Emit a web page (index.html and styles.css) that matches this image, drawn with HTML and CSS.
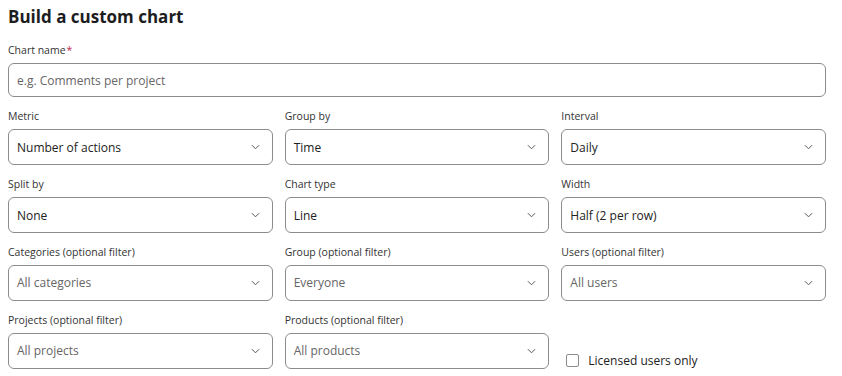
FILE: index.html
```html
<!DOCTYPE html>
<html lang="en">
<head>
    <meta charset="UTF-8">
    <meta name="viewport" content="width=device-width, initial-scale=1.0">
    <title>Build a custom chart</title>
    <link rel="stylesheet" href="styles.css">
</head>
<body>
    <h1 class="title">Build a custom chart</h1>

    <div class="field">
        <label class="label">Chart name<span class="req">*</span></label>
        <div class="box"><span class="placeholder">e.g. Comments per project</span></div>
    </div>

    <div class="grid">
        <div class="field">
            <label class="label">Metric</label>
            <div class="box select"><span>Number of actions</span><svg class="chev" viewBox="0 0 10 6"><path d="M1 1l4 4 4-4"/></svg></div>
        </div>
        <div class="field">
            <label class="label">Group by</label>
            <div class="box select"><span>Time</span><svg class="chev" viewBox="0 0 10 6"><path d="M1 1l4 4 4-4"/></svg></div>
        </div>
        <div class="field">
            <label class="label">Interval</label>
            <div class="box select"><span>Daily</span><svg class="chev" viewBox="0 0 10 6"><path d="M1 1l4 4 4-4"/></svg></div>
        </div>

        <div class="field">
            <label class="label">Split by</label>
            <div class="box select"><span>None</span><svg class="chev" viewBox="0 0 10 6"><path d="M1 1l4 4 4-4"/></svg></div>
        </div>
        <div class="field">
            <label class="label">Chart type</label>
            <div class="box select"><span>Line</span><svg class="chev" viewBox="0 0 10 6"><path d="M1 1l4 4 4-4"/></svg></div>
        </div>
        <div class="field">
            <label class="label">Width</label>
            <div class="box select"><span>Half (2 per row)</span><svg class="chev" viewBox="0 0 10 6"><path d="M1 1l4 4 4-4"/></svg></div>
        </div>

        <div class="field">
            <label class="label">Categories (optional filter)</label>
            <div class="box select"><span class="placeholder">All categories</span><svg class="chev" viewBox="0 0 10 6"><path d="M1 1l4 4 4-4"/></svg></div>
        </div>
        <div class="field">
            <label class="label">Group (optional filter)</label>
            <div class="box select"><span class="placeholder">Everyone</span><svg class="chev" viewBox="0 0 10 6"><path d="M1 1l4 4 4-4"/></svg></div>
        </div>
        <div class="field">
            <label class="label">Users (optional filter)</label>
            <div class="box select"><span class="placeholder">All users</span><svg class="chev" viewBox="0 0 10 6"><path d="M1 1l4 4 4-4"/></svg></div>
        </div>

        <div class="field">
            <label class="label">Projects (optional filter)</label>
            <div class="box select"><span class="placeholder">All projects</span><svg class="chev" viewBox="0 0 10 6"><path d="M1 1l4 4 4-4"/></svg></div>
        </div>
        <div class="field">
            <label class="label">Products (optional filter)</label>
            <div class="box select"><span class="placeholder">All products</span><svg class="chev" viewBox="0 0 10 6"><path d="M1 1l4 4 4-4"/></svg></div>
        </div>
        <div class="field check-field">
            <label class="check"><span class="checkbox"></span>Licensed users only</label>
        </div>
    </div>
</body>
</html>
```

FILE: styles.css
```css
body { margin: 0; padding: 0 16px 0 8px; background: #fff; color: #222; font-family: "Open Sans", "Noto Sans", sans-serif; }
.title { font-size: 17px; font-weight: 700; margin: 4px 0 0; line-height: 26px; color: #1d1d1f; }
.field { display: flex; flex-direction: column; }
.label { font-size: 10.5px; color: #333; line-height: 15px; margin: 13px 0 5px; }
.grid .label { margin-top: 12.4px; }
.req { color: #c0284f; margin-left: 1px; }
.box { height: 32px; border: 1px solid #8c8c90; border-radius: 6px; display: flex; align-items: center; padding: 0 8px; font-size: 12px; color: #222; }
.select { height: 33.5px; justify-content: space-between; padding-right: 12px; }
.placeholder { color: #666; }
.chev { width: 9px; height: 6px; fill: none; stroke: #555; stroke-width: 1.1; }
.grid { display: grid; grid-template-columns: repeat(3, 1fr); column-gap: 12px; }
.check-field { justify-content: flex-end; }
.check { display: flex; align-items: center; font-size: 12px; color: #222; margin: 0 0 0 5px; }
.checkbox { width: 11px; height: 11px; border: 1px solid #8c8c90; border-radius: 2px; margin-right: 9px; }
```
